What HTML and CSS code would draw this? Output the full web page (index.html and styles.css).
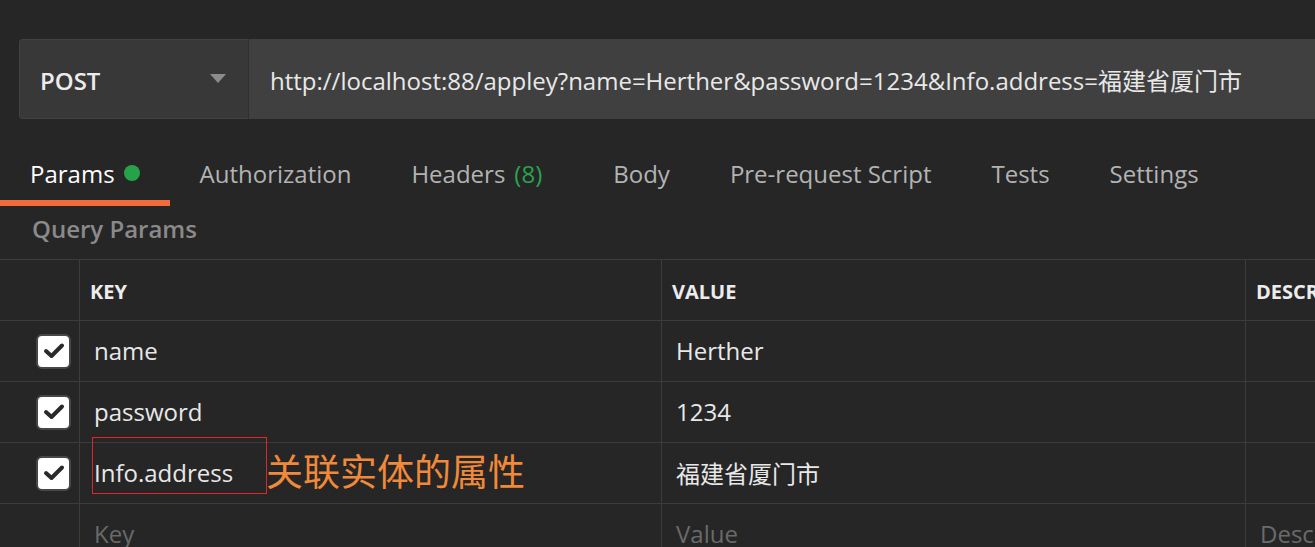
FILE: index.html
```html
<!DOCTYPE html>
<html lang="zh-CN">
<head>
<meta charset="utf-8">
<title>Params</title>
<link rel="stylesheet" href="styles.css">
</head>
<body>
<div class="page">
  <div class="request-bar">
    <div class="method">
      <span class="method-name">POST</span>
      <svg class="caret" width="16" height="10" viewBox="0 0 16 10"><path d="M0 0 H16 L8 9 Z" fill="#8c8c8c"/></svg>
    </div>
    <div class="url">http://localhost:88/appley?name=Herther&amp;password=1234&amp;Info.address=福建省厦门市</div>
  </div>

  <div class="tabs">
    <div class="tab active">Params <span class="dot"></span></div>
    <div class="tab">Authorization</div>
    <div class="tab headers">Headers <span class="count">(8)</span></div>
    <div class="tab">Body</div>
    <div class="tab">Pre-request Script</div>
    <div class="tab">Tests</div>
    <div class="tab">Settings</div>
  </div>

  <div class="section-title">Query Params</div>

  <div class="table">
    <div class="row head">
      <div class="cell check"></div>
      <div class="cell key">KEY</div>
      <div class="cell value">VALUE</div>
      <div class="cell desc">DESCR</div>
    </div>
    <div class="row">
      <div class="cell check"><span class="checkbox"><svg width="22" height="18" viewBox="0 0 22 18"><path d="M3 9 L8.5 14 L19 3.5" fill="none" stroke="#2a2a2a" stroke-width="4" stroke-linecap="round" stroke-linejoin="round"/></svg></span></div>
      <div class="cell key">name</div>
      <div class="cell value">Herther</div>
      <div class="cell desc"></div>
    </div>
    <div class="row">
      <div class="cell check"><span class="checkbox"><svg width="22" height="18" viewBox="0 0 22 18"><path d="M3 9 L8.5 14 L19 3.5" fill="none" stroke="#2a2a2a" stroke-width="4" stroke-linecap="round" stroke-linejoin="round"/></svg></span></div>
      <div class="cell key">password</div>
      <div class="cell value">1234</div>
      <div class="cell desc"></div>
    </div>
    <div class="row annotated">
      <div class="cell check"><span class="checkbox"><svg width="22" height="18" viewBox="0 0 22 18"><path d="M3 9 L8.5 14 L19 3.5" fill="none" stroke="#2a2a2a" stroke-width="4" stroke-linecap="round" stroke-linejoin="round"/></svg></span></div>
      <div class="cell key">Info.address</div>
      <div class="cell value">福建省厦门市</div>
      <div class="cell desc"></div>
      <div class="mark-box"></div>
      <div class="mark-text">关联实体的属性</div>
    </div>
    <div class="row placeholder">
      <div class="cell check"></div>
      <div class="cell key">Key</div>
      <div class="cell value">Value</div>
      <div class="cell desc">Description</div>
    </div>
  </div>
</div>
</body>
</html>
```

FILE: styles.css
```css
* { box-sizing: border-box; }

html, body {
  margin: 0;
  padding: 0;
  background: #262626;
  overflow: hidden;
}

.page {
  width: 1315px;
  height: 547px;
  overflow: hidden;
  font-family: "Open Sans", "Noto Sans CJK SC", sans-serif;
  color: #e6e6e6;
}

.request-bar {
  display: flex;
  padding: 39px 0 0 19px;
  width: 1400px;
}

.method {
  width: 230px;
  height: 80px;
  background: #383838;
  border: 1px solid #424242;
  border-right: 1px solid #303030;
  border-radius: 4px 0 0 4px;
  display: flex;
  align-items: center;
  justify-content: space-between;
  padding: 0 22px 0 20px;
}

.method-name {
  font-size: 24px;
  font-weight: 600;
  color: #ececec;
  padding-top: 2px;
}

.url {
  flex: 1;
  height: 80px;
  background: #404040;
  display: flex;
  align-items: center;
  padding-left: 21px;
  font-size: 24px;
  color: #e8e8e8;
  white-space: nowrap;
}

.tabs {
  display: flex;
  margin-top: 25px;
  height: 62px;
}

.tab {
  padding: 0 30px;
  display: flex;
  align-items: center;
  font-size: 24px;
  color: #b3b3b3;
  border-bottom: 6px solid transparent;
  padding-top: 2px;
  white-space: nowrap;
}

.tab.active {
  color: #ffffff;
  border-bottom-color: #f26b3a;
}

.dot {
  display: inline-block;
  width: 16px;
  height: 16px;
  border-radius: 50%;
  background: #26a24a;
  margin-left: 9px;
}

.count {
  color: #2aa34e;
  margin-left: 9px;
}

.tab.headers { padding-right: 41px; }

.section-title {
  height: 53px;
  padding: 0 0 8px 32px;
  display: flex;
  align-items: center;
  font-size: 24px;
  font-weight: 600;
  color: #8a8a8a;
}

.table {
  border-top: 1px solid #3c3c3c;
}

.row {
  display: grid;
  grid-template-columns: 80px 582px 584px 1fr;
  height: 61px;
  border-bottom: 1px solid #3c3c3c;
  position: relative;
}

.cell {
  border-right: 1px solid #3c3c3c;
  display: flex;
  align-items: center;
  padding-left: 14px;
  padding-bottom: 2px;
  font-size: 24px;
  color: #e8e8e8;
  white-space: nowrap;
  overflow: hidden;
}

.cell.desc { border-right: none; }

.cell.check {
  justify-content: flex-end;
  padding: 0 8px 0 0;
}

.head .cell {
  font-size: 20px;
  font-weight: 700;
  padding-left: 10px;
  padding-bottom: 0;
  padding-top: 2px;
  color: #ececec;
}

.head .cell.check { padding: 0; }

.checkbox {
  width: 35px;
  height: 35px;
  border: 2px solid #474747;
  border-radius: 6px;
  background: #ffffff;
  display: flex;
  align-items: center;
  justify-content: center;
}

.placeholder .cell {
  color: #6a6a6a;
}

.mark-box {
  position: absolute;
  left: 92px;
  top: -6px;
  width: 175px;
  height: 57px;
  border: 1px solid #e0252b;
}

.mark-text {
  position: absolute;
  left: 266px;
  top: 2px;
  font-family: "Noto Sans CJK SC", sans-serif;
  font-size: 37px;
  line-height: 50px;
  color: #f0893a;
}
```
